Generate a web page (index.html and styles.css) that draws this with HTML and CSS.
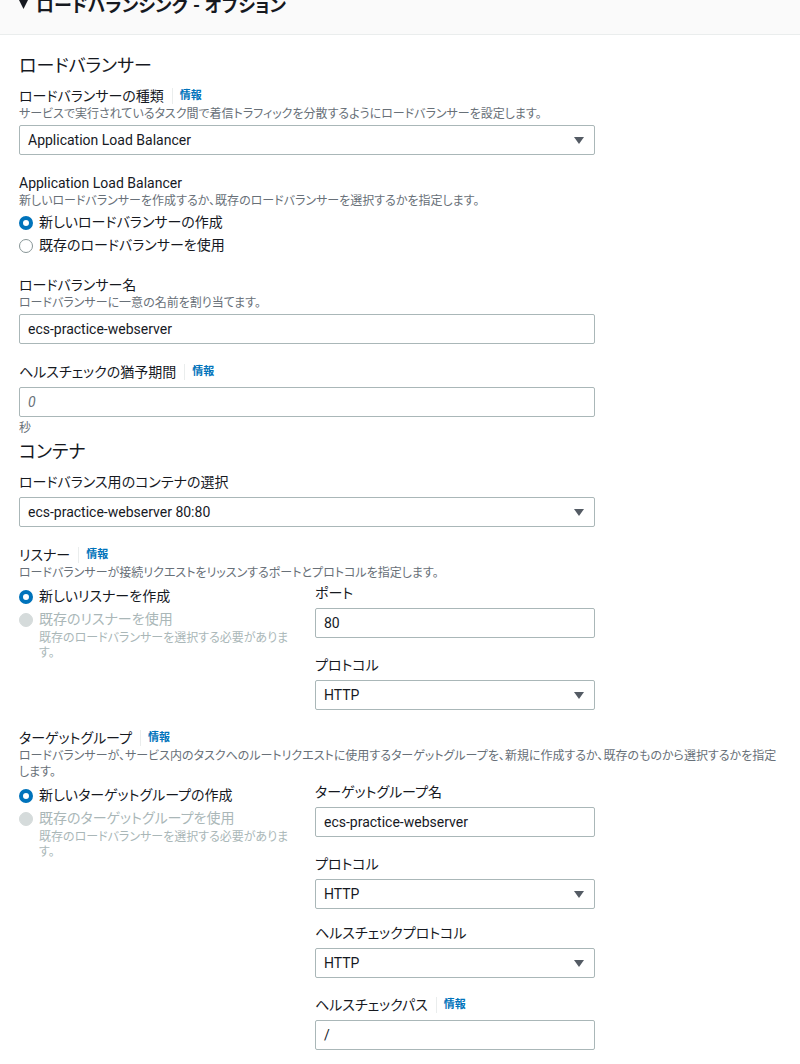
FILE: index.html
```html
<!DOCTYPE html>
<html lang="ja">
<head>
    <meta charset="utf-8">
    <title>ロードバランシング - オプション</title>
    <link rel="stylesheet" href="styles.css">
</head>
<body>
    <div class="section-header">
        <h1 class="section-title">
            <svg class="caret" width="9" height="9" viewBox="0 0 9 9"><path d="M0 0h9L4.5 9z" fill="#16191f"/></svg>
            ロードバランシング - オプション
        </h1>
    </div>

    <div class="section-body">
        <h2 class="group-title">ロードバランサー</h2>

        <div class="field">
            <div class="label">ロードバランサーの種類 <span class="info">情報</span></div>
            <div class="desc">サービスで実行されているタスク間で着信トラフィックを分散するようにロードバランサーを設定します。</div>
            <div class="control select">Application Load Balancer<span class="arrow"></span></div>
        </div>

        <div class="field">
            <div class="label">Application Load Balancer</div>
            <div class="desc">新しいロードバランサーを作成するか、既存のロードバランサーを選択するかを指定します。</div>
            <div class="radio-group">
                <div class="radio-row"><span class="radio checked"></span>新しいロードバランサーの作成</div>
                <div class="radio-row"><span class="radio"></span>既存のロードバランサーを使用</div>
            </div>
        </div>

        <div class="field">
            <div class="label">ロードバランサー名</div>
            <div class="desc">ロードバランサーに一意の名前を割り当てます。</div>
            <div class="control">ecs-practice-webserver</div>
        </div>

        <div class="field">
            <div class="label">ヘルスチェックの猶予期間 <span class="info">情報</span></div>
            <div class="control placeholder">0</div>
            <div class="hint">秒</div>
        </div>

        <h2 class="group-title tight">コンテナ</h2>

        <div class="field">
            <div class="label">ロードバランス用のコンテナの選択</div>
            <div class="control select">ecs-practice-webserver 80:80<span class="arrow"></span></div>
        </div>

        <div class="field">
            <div class="label">リスナー <span class="info">情報</span></div>
            <div class="desc">ロードバランサーが接続リクエストをリッスンするポートとプロトコルを指定します。</div>
            <div class="columns">
                <div class="radio-group">
                    <div class="radio-row"><span class="radio checked"></span>新しいリスナーを作成</div>
                    <div class="radio-row disabled"><span class="radio"></span>既存のリスナーを使用</div>
                    <div class="radio-desc">既存のロードバランサーを選択する必要があります。</div>
                </div>
                <div>
                    <div class="sub-field">
                        <div class="label">ポート</div>
                        <div class="control">80</div>
                    </div>
                    <div class="sub-field">
                        <div class="label">プロトコル</div>
                        <div class="control select">HTTP<span class="arrow"></span></div>
                    </div>
                </div>
            </div>
        </div>

        <div class="field">
            <div class="label">ターゲットグループ <span class="info">情報</span></div>
            <div class="desc wide">ロードバランサーが、サービス内のタスクへのルートリクエストに使用するターゲットグループを、新規に作成するか、既存のものから選択するかを指定します。</div>
            <div class="columns">
                <div class="radio-group">
                    <div class="radio-row"><span class="radio checked"></span>新しいターゲットグループの作成</div>
                    <div class="radio-row disabled"><span class="radio"></span>既存のターゲットグループを使用</div>
                    <div class="radio-desc">既存のロードバランサーを選択する必要があります。</div>
                </div>
                <div>
                    <div class="sub-field">
                        <div class="label">ターゲットグループ名</div>
                        <div class="control">ecs-practice-webserver</div>
                    </div>
                    <div class="sub-field">
                        <div class="label">プロトコル</div>
                        <div class="control select">HTTP<span class="arrow"></span></div>
                    </div>
                    <div class="sub-field tight">
                        <div class="label">ヘルスチェックプロトコル</div>
                        <div class="control select">HTTP<span class="arrow"></span></div>
                    </div>
                    <div class="sub-field">
                        <div class="label">ヘルスチェックパス <span class="info">情報</span></div>
                        <div class="control">/</div>
                    </div>
                </div>
            </div>
        </div>
    </div>
</body>
</html>
```

FILE: styles.css
```css
body {
    margin: 0;
    background: #fff;
    color: #16191f;
    font-family: Roboto, "Noto Sans CJK JP", sans-serif;
    font-feature-settings: "palt";
    font-size: 14px;
}

.section-header {
    height: 34px;
    background: #fafafa;
    border-bottom: 1px solid #eaeded;
    overflow: hidden;
}

.section-title {
    margin: -6px 0 0;
    padding: 0 19px;
    font-size: 18px;
    line-height: 24px;
    font-weight: 700;
    display: flex;
    align-items: center;
    gap: 8px;
}

.caret {
    margin-top: -4px;
}

.section-body {
    padding: 19px 8px 40px 19px;
}

.group-title {
    margin: 0 0 8px;
    font-size: 18px;
    line-height: 24px;
    font-weight: 400;
}

.group-title.tight {
    margin-top: 4px;
}

.field {
    margin-bottom: 18px;
}

.label {
    line-height: 20px;
    display: flex;
    align-items: center;
}

.info {
    display: inline-block;
    margin-left: 8px;
    padding-left: 7px;
    border-left: 1px solid #eaeded;
    color: #0073bb;
    font-size: 11px;
    font-weight: 700;
    line-height: 16px;
}

.desc {
    font-size: 12px;
    line-height: 16px;
    color: #687078;
}

.desc.wide {
    max-width: 764px;
}

.control {
    position: relative;
    max-width: 576px;
    height: 30px;
    margin-top: 3px;
    padding: 0 8px;
    box-sizing: border-box;
    border: 1px solid #aab7b8;
    border-radius: 2px;
    display: flex;
    align-items: center;
}

.label + .control {
    margin-top: 5px;
}

.control.placeholder {
    color: #687078;
    font-style: italic;
}

.arrow {
    position: absolute;
    right: 10px;
    top: 11px;
    border-left: 5px solid transparent;
    border-right: 5px solid transparent;
    border-top: 7px solid #545b64;
}

.hint {
    margin-top: 3px;
    font-size: 12px;
    line-height: 16px;
    color: #687078;
}

.field:has(.hint) {
    margin-bottom: 0;
}

.radio-group {
    margin-top: 2px;
}

.radio-row {
    display: flex;
    align-items: center;
    gap: 6px;
    line-height: 23px;
}

.radio {
    width: 14px;
    height: 14px;
    box-sizing: border-box;
    border-radius: 50%;
    border: 1.5px solid #879596;
    background: #fff;
    flex: none;
}

.radio.checked {
    border: 4px solid #0073bb;
}

.radio-row.disabled {
    color: #aab7b8;
}

.radio-row.disabled .radio {
    border-color: #d5dbdb;
    background: #d5dbdb;
}

.radio-desc {
    padding-left: 20px;
    font-size: 12px;
    line-height: 15px;
    color: #aab7b8;
}

.columns {
    max-width: 576px;
    margin-top: 2px;
    display: grid;
    grid-template-columns: 1fr 1fr;
    column-gap: 16px;
}

.sub-field + .sub-field {
    margin-top: 17px;
}

.sub-field.tight {
    margin-top: 14px;
}
```
